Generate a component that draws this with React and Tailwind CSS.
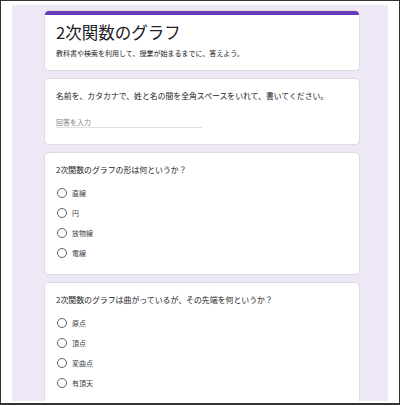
import React from 'react'

const font = { fontFamily: '"Noto Sans CJK JP", "Noto Sans", sans-serif' }

const questions = [
  {
    title: '2次関数のグラフの形は何というか？',
    options: ['直線', '円', '放物線', '電線'],
  },
  {
    title: '2次関数のグラフは曲がっているが、その先端を何というか？',
    options: ['原点', '頂点', '変曲点', '有頂天'],
  },
]

const Card = ({ children }) => (
  <div className="w-[316px] ml-[32px] mt-[7px] bg-white border border-[#dadce0] rounded-[5px]">
    {children}
  </div>
)

const Radio = ({ label }) => (
  <div className="h-[20px] flex items-center">
    <div className="ml-[1px] w-[10px] h-[10px] rounded-full border-[1.5px] border-[#5f6368]" />
    <span className="ml-[5px] text-[7px] leading-[10px] text-[#3c4043]">{label}</span>
  </div>
)

const ChoiceCard = ({ title, options }) => (
  <Card>
    <div className="pl-[11px] pt-[11px] pb-[11px]">
      <p className="text-[7.9px] leading-[12px] text-[#202124] mb-[7px]">{title}</p>
      {options.map((opt) => (
        <Radio key={opt} label={opt} />
      ))}
    </div>
  </Card>
)

export default function App() {
  return (
    <div style={font} className="w-[400px] h-[406px] bg-white">
      <div className="w-[400px] h-[405px] border-x border-t border-b-2 border-[#333] px-[11px] pt-[4px] pb-[2px] bg-white">
        <div className="h-full bg-[#ede7f6] overflow-hidden pt-[5px]">
          {/* header */}
          <div className="w-[316px] ml-[32px] bg-white border border-[#dadce0] rounded-[5px] overflow-hidden">
            <div className="h-[5px] bg-[#673ab7] -mx-[1px] -mt-[1px]" />
            <div className="pl-[11px] pt-[6px] pb-[12px]">
              <h1 className="text-[16.5px] leading-[22px] text-[#202124]">2次関数のグラフ</h1>
              <p className="mt-[5px] text-[7px] leading-[10px] text-[#202124]">
                教科書や検索を利用して、授業が始まるまでに、答えよう。
              </p>
            </div>
          </div>

          <Card>
            <div className="pl-[11px] pt-[11px] pb-[16px]">
              <p className="text-[7.85px] leading-[12px] text-[#202124]">
                名前を、カタカナで、姓と名の間を全角スペースをいれて、書いてください。
              </p>
              <div className="mt-[15px] w-[146px] h-[11px] border-b border-[#e0e0e0] text-[7px] leading-[10px] text-[#80868b]">
                回答を入力
              </div>
            </div>
          </Card>

          {questions.map((q) => (
            <ChoiceCard key={q.title} {...q} />
          ))}
        </div>
      </div>
    </div>
  )
}
